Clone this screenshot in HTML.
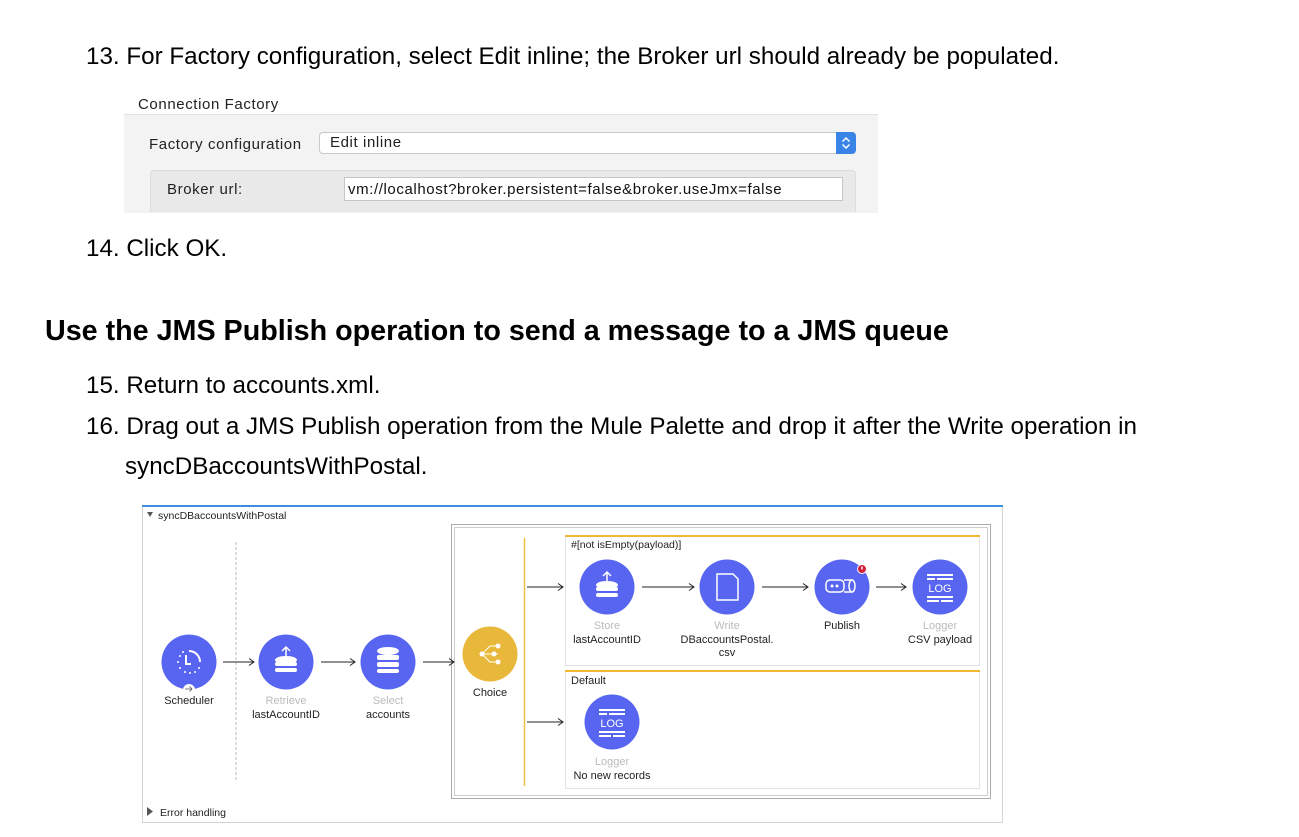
<!DOCTYPE html>
<html><head><meta charset="utf-8"><style>
body{margin:0;width:1299px;height:837px;background:#fff;position:relative;overflow:hidden;font-family:"Liberation Sans",Arial,sans-serif;color:#000}
.t{position:absolute;white-space:nowrap}
.p{font-size:24.2px;line-height:26px}
.s{font-size:15px;color:#222;letter-spacing:0.6px}
</style></head><body>
<div class="t p" style="left:86px;top:44px">13. For Factory configuration, select Edit inline; the Broker url should already be populated.</div>
<div class="t s" style="left:138px;top:96px">Connection Factory</div>
<div style="position:absolute;left:124px;top:114px;width:754px;height:98px;background:#f3f3f3;border-top:1px solid #e2e2e2"></div>
<div class="t s" style="left:149px;top:136px">Factory configuration</div>
<div style="position:absolute;left:319px;top:132px;width:536px;height:22px;background:#fff;border:1px solid #c9c9c9;border-radius:4px;box-sizing:border-box"></div>
<div class="t s" style="left:330px;top:134px">Edit inline</div>
<div style="position:absolute;left:836px;top:132px;width:20px;height:22px;background:#3a84e8;border-radius:0 4px 4px 0"><svg width="20" height="22"><path d="M6.5 9.5L10 6l3.5 3.5M6.5 12.5L10 16l3.5-3.5" fill="none" stroke="#fff" stroke-width="1.5"/></svg></div>
<div style="position:absolute;left:150px;top:170px;width:706px;height:42px;background:#e9e9e9;border:1px solid #dcdcdc;border-bottom:none;border-radius:4px 4px 0 0;box-sizing:border-box"></div>
<div class="t s" style="left:167px;top:181px">Broker url:</div>
<div style="position:absolute;left:344px;top:177px;width:499px;height:24px;background:#fff;border:1px solid #c6c6c6;box-sizing:border-box"></div>
<div class="t s" style="left:348px;top:181px;color:#111">vm://localhost?broker.persistent=false&amp;broker.useJmx=false</div>
<div class="t p" style="left:86px;top:236px">14. Click OK.</div>
<div class="t" style="left:45px;top:315px;font-size:28.7px;font-weight:bold;line-height:32px">Use the JMS Publish operation to send a message to a JMS queue</div>
<div class="t p" style="left:86px;top:373px">15. Return to accounts.xml.</div>
<div class="t p" style="left:86px;top:414px">16. Drag out a JMS Publish operation from the Mule Palette and drop it after the Write operation in</div>
<div class="t p" style="left:125px;top:454px">syncDBaccountsWithPostal.</div>

<svg style="position:absolute;left:0;top:0" width="1299" height="837" font-family="Liberation Sans,Arial,sans-serif" font-size="11">
<defs>
<marker id="a" markerWidth="8" markerHeight="8" refX="7" refY="4" orient="auto" markerUnits="userSpaceOnUse"><path d="M2 0.5L7 4L2 7.5" fill="none" stroke="#222" stroke-width="1"/></marker>
</defs>
<rect x="142.5" y="505.5" width="860" height="317" fill="#fff" stroke="#d4d4d4"/>
<line x1="142" y1="506" x2="1003" y2="506" stroke="#3d8fe0" stroke-width="2"/>
<path d="M147 512h6l-3 5z" fill="#555"/>
<text x="158" y="519" font-size="10.5" fill="#222">syncDBaccountsWithPostal</text>
<line x1="236" y1="542" x2="236" y2="782" stroke="#bbb" stroke-dasharray="3,2"/>
<path d="M147 807v9l6-4.5z" fill="#555"/>
<text x="160" y="816" font-size="10.5" fill="#222">Error handling</text>
<rect x="451.5" y="524.5" width="539" height="274" fill="none" stroke="#aaa"/>
<rect x="454.5" y="527.5" width="533" height="268" fill="none" stroke="#ccc"/>
<line x1="524.5" y1="538" x2="524.5" y2="786" stroke="#f0c040" stroke-width="1.5"/>
<rect x="565.5" y="535.5" width="414" height="130" fill="#fff" stroke="#e4e4e4"/>
<line x1="565" y1="536" x2="980" y2="536" stroke="#f0b830" stroke-width="2"/>
<rect x="565.5" y="670.5" width="414" height="118" fill="#fff" stroke="#e4e4e4"/>
<line x1="565" y1="671" x2="980" y2="671" stroke="#f0b830" stroke-width="2"/>
<text x="571" y="548" fill="#222" font-size="10.5">#[not isEmpty(payload)]</text>
<text x="571" y="684" fill="#222">Default</text>
<g stroke="#222" stroke-width="1" marker-end="url(#a)">
<line x1="223" y1="662" x2="254" y2="662"/><line x1="321" y1="662" x2="355" y2="662"/><line x1="423" y1="662" x2="454" y2="662"/>
<line x1="527" y1="587" x2="563" y2="587"/><line x1="527" y1="722" x2="563" y2="722"/>
<line x1="642" y1="587" x2="694" y2="587"/><line x1="762" y1="587" x2="808" y2="587"/><line x1="876" y1="587" x2="906" y2="587"/>
</g>
<g fill="#5865f0">
<circle cx="189" cy="662" r="27.5"/><circle cx="286" cy="662" r="27.5"/><circle cx="388" cy="662" r="27.5"/>
<circle cx="607" cy="587" r="27.5"/><circle cx="727" cy="587" r="27.5"/><circle cx="842" cy="587" r="27.5"/><circle cx="940" cy="587" r="27.5"/>
<circle cx="612" cy="722" r="27.5"/>
</g>
<circle cx="490" cy="654" r="27.5" fill="#e8b83a"/>
<circle cx="189" cy="690" r="6" fill="#fff"/>
<path d="M185 689h7M189.5 686.5l2.5 2.5-2.5 2.5" stroke="#555" fill="none" stroke-width="0.8"/>
<g fill="none" stroke="#fff" stroke-width="2"><path d="M189 651a11 11 0 0 1 11 11"/><path d="M186 655v9h5"/></g>
<g fill="#fff"><circle cx="180" cy="656" r="1"/><circle cx="178" cy="662" r="1"/><circle cx="180" cy="668" r="1"/><circle cx="185" cy="672" r="1"/><circle cx="190" cy="673" r="1"/><circle cx="195" cy="672" r="1"/><circle cx="199" cy="668" r="1"/><circle cx="183" cy="652" r="1"/></g>
<g fill="#fff">
<ellipse cx="286" cy="660" rx="11" ry="4"/><rect x="275" y="662" width="22" height="4" rx="2"/><rect x="275" y="668" width="22" height="4" rx="2"/>
<path d="M286 647v9M282 651l4-4 4 4" stroke="#fff" stroke-width="1.5" fill="none"/>
<ellipse cx="388" cy="651" rx="11" ry="4"/><rect x="377" y="655" width="22" height="5" rx="2"/><rect x="377" y="662" width="22" height="5" rx="2"/><rect x="377" y="669" width="22" height="4" rx="2"/>
<ellipse cx="607" cy="585" rx="11" ry="4"/><rect x="596" y="587" width="22" height="4" rx="2"/><rect x="596" y="593" width="22" height="4" rx="2"/>
<path d="M607 572v9M603 576l4-4 4 4" stroke="#fff" stroke-width="1.5" fill="none"/>
</g>
<path d="M717 574h16l5 5v21h-21z" fill="none" stroke="#fff" stroke-width="1.5"/>
<g fill="none" stroke="#fff" stroke-width="1.5"><rect x="826" y="580" width="18" height="12" rx="4"/><path d="M844 580h8"/><path d="M844 592h8"/><ellipse cx="852" cy="586" rx="3" ry="6"/></g>
<circle cx="832" cy="586" r="1.5" fill="#fff"/><circle cx="837" cy="586" r="1.5" fill="#fff"/>
<circle cx="862" cy="569" r="4.5" fill="#d0203a" stroke="#fff"/><rect x="861.3" y="566.5" width="1.4" height="3" fill="#fff"/>
<g fill="#fff">
<rect x="927" y="574" width="26" height="2"/><rect x="927" y="578" width="8" height="2"/><rect x="937" y="578" width="16" height="2"/>
<rect x="927" y="596" width="26" height="2"/><rect x="927" y="600" width="12" height="2"/><rect x="941" y="600" width="12" height="2"/>
<rect x="599" y="709" width="26" height="2"/><rect x="599" y="713" width="8" height="2"/><rect x="609" y="713" width="16" height="2"/>
<rect x="599" y="731" width="26" height="2"/><rect x="599" y="735" width="12" height="2"/><rect x="613" y="735" width="12" height="2"/>
</g>
<text x="940" y="592" text-anchor="middle" fill="#fff" font-size="11">LOG</text>
<text x="612" y="727" text-anchor="middle" fill="#fff" font-size="11">LOG</text>
<g stroke="#fff" fill="none" stroke-width="1"><path d="M482 654l8-8h8M482 654l8 8h8M482 654h16"/></g>
<g fill="#fff"><circle cx="482" cy="654" r="2.5"/><circle cx="498" cy="646" r="2.5"/><circle cx="494" cy="654" r="2.5"/><circle cx="498" cy="662" r="2.5"/></g>
<g text-anchor="middle" fill="#222">
<text x="189" y="704">Scheduler</text>
<text x="286" y="704" fill="#bbb">Retrieve</text><text x="286" y="718">lastAccountID</text>
<text x="388" y="704" fill="#bbb">Select</text><text x="388" y="718">accounts</text>
<text x="490" y="696">Choice</text>
<text x="607" y="629" fill="#bbb">Store</text><text x="607" y="643">lastAccountID</text>
<text x="727" y="629" fill="#bbb">Write</text><text x="727" y="643">DBaccountsPostal.</text><text x="727" y="656">csv</text>
<text x="842" y="629">Publish</text>
<text x="940" y="629" fill="#bbb">Logger</text><text x="940" y="643">CSV payload</text>
<text x="612" y="765" fill="#bbb">Logger</text><text x="612" y="779">No new records</text>
</g>
</svg>
</body></html>
